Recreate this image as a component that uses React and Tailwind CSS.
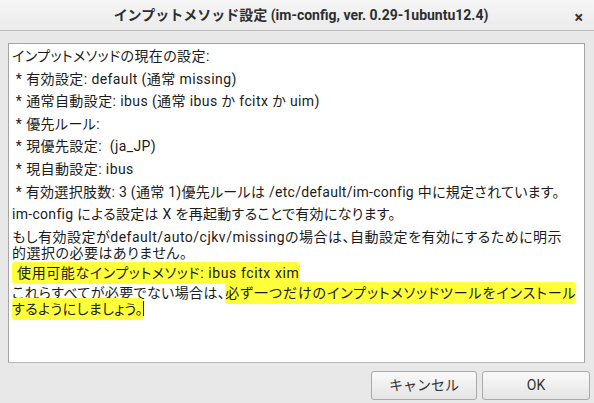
import React from 'react';

const font = { fontFamily: "Roboto, 'Noto Sans CJK JP', sans-serif" };

function Line({ children, className = 'tracking-[0.4px]' }) {
  return (
    <div className={`whitespace-pre leading-[16px] [font-feature-settings:'palt'] ${className}`}>{children}</div>
  );
}

function Mark({ children, className = '' }) {
  return (
    <span className={`bg-[#ffff3c] rounded-[3px] py-[3px] box-decoration-clone ${className}`}>
      {children}
    </span>
  );
}

export default function App() {
  return (
    <div
      className="w-[594px] h-[403px] bg-[#e8e8e8] flex flex-col overflow-hidden text-[#1b1b1b]"
      style={font}
    >
      {/* title bar */}
      <div className="h-[31px] shrink-0 flex items-center relative bg-gradient-to-b from-[#f6f6f6] to-[#ebebeb] border-b border-[#bcbcbc]">
        <div className="flex-1 text-center text-[14px] font-bold text-[#2e2e2e] pl-[8px]">
          インプットメソッド設定 (im-config, ver. 0.29-1ubuntu12.4)
        </div>
        <div className="absolute right-[11px] top-[6px] text-[16px] font-bold text-[#333]">×</div>
      </div>

      {/* text area */}
      <div className="ml-[8px] mt-[12px] w-[577px] h-[320px] shrink-0 bg-white border border-[#a4a4a4] border-b-[#b8b8b8] pl-[3px] pt-[4px] text-[14px]">
        <Line className="tracking-[0.4px] mb-[6.6px]">インプットメソッドの現在の設定:</Line>
        <Line className="tracking-[0.4px] mb-[6.6px]"> * 有効設定: default (通常 missing)</Line>
        <Line className="tracking-[0.4px] mb-[6.6px]"> * 通常自動設定: ibus (通常 ibus か fcitx か uim)</Line>
        <Line className="tracking-[0.4px] mb-[6.6px]"> * 優先ルール:</Line>
        <Line className="tracking-[0.4px] mb-[6.6px]"> * 現優先設定:  (ja_JP)</Line>
        <Line className="tracking-[0.4px] mb-[6.6px]"> * 現自動設定: ibus</Line>
        <Line className="tracking-[0.28px] mb-[6.6px]"> * 有効選択肢数: 3 (通常 1)優先ルールは /etc/default/im-config 中に規定されています。</Line>
        <Line className="tracking-[0.3px] mb-[6.6px]">im-config による設定は X を再起動することで有効になります。</Line>
        <Line className="tracking-[0.5px] mb-[4px]">
          もし有効設定がdefault/auto/cjkv/missingの場合は、自動設定を有効にするために明示
          <br />
          的選択の必要はありません。
        </Line>
        <Line className="tracking-[0.6px] mb-[4px]">
          <Mark className="px-[1px]"> 使用可能なインプットメソッド: ibus fcitx xim</Mark>
        </Line>
        <Line className="tracking-[0.4px]">
          これらすべてが必要でない場合は、
          <Mark className="tracking-[0.9px]">必ず一つだけのインプットメソッドツールをインストール</Mark>
          <br />
          <Mark>するようにしましょう。</Mark>
          <span className="inline-block w-px h-[15px] bg-[#222] align-[-2px]" />
        </Line>
      </div>

      {/* buttons */}
      <div className="mt-[8px] flex justify-end gap-[5px] pr-[4px]">
        <button className="w-[106px] h-[29px] rounded-[3px] border border-[#a9a9a9] bg-gradient-to-b from-[#fafafa] to-[#e4e4e4] text-[14px] text-[#333]">
          キャンセル
        </button>
        <button className="w-[108px] h-[29px] rounded-[3px] border border-[#a9a9a9] bg-gradient-to-b from-[#fafafa] to-[#e4e4e4] text-[14px] text-[#333]">
          OK
        </button>
      </div>
    </div>
  );
}
